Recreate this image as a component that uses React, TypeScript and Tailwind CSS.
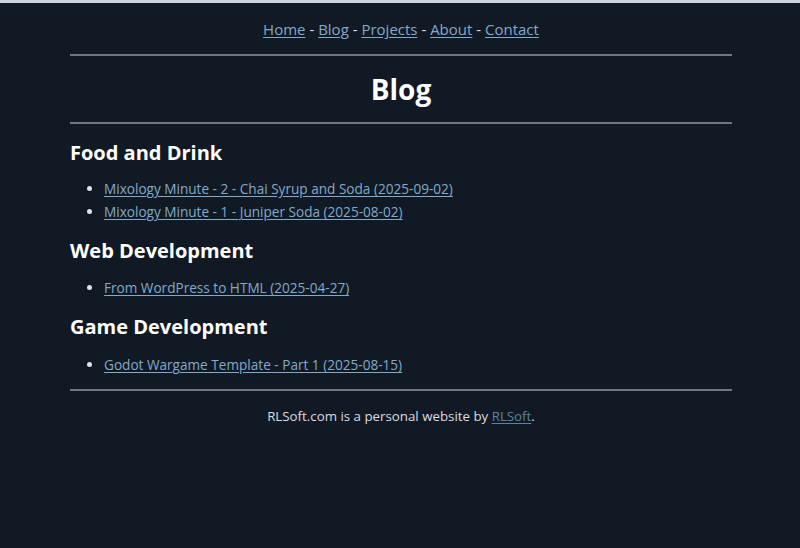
import React from "react";

const font = { fontFamily: '"Open Sans", "Noto Sans", sans-serif' };

function A({ children }: { children: React.ReactNode }) {
  return <a href="#" className="text-[#82a9c9] underline underline-offset-2">{children}</a>;
}

export default function App() {
  return (
    <div className="min-h-[548px] bg-[#111a24] border-t-[3px] border-[#cfd2d6] text-[#dfe3e8]" style={font}>
      <div className="ml-[70px] w-[662px] flex flex-col">
        <nav className="text-center text-[15px] leading-[22px] pt-[15px] pb-[14px] text-[#d8dce0]">
          <A>Home</A> - <A>Blog</A> - <A>Projects</A> - <A>About</A> - <A>Contact</A>
        </nav>
        <div className="h-[2px] bg-[#6f7780]" />
        <h1 className="text-center text-[28px] font-bold text-white leading-[36px] py-[15px]">Blog</h1>
        <div className="h-[2px] bg-[#6f7780]" />
        <h2 className="text-[20px] font-bold text-white leading-[28px] mt-[15px]">Food and Drink</h2>
        <ul className="list-disc pl-[34px] mt-[10px] text-[13.6px] leading-[23px]">
          <li><A>Mixology Minute - 2 - Chai Syrup and Soda (2025-09-02)</A></li>
          <li><A>Mixology Minute - 1 - Juniper Soda (2025-08-02)</A></li>
        </ul>
        <h2 className="text-[20px] font-bold text-white leading-[28px] mt-[14px]">Web Development</h2>
        <ul className="list-disc pl-[34px] mt-[11px] text-[13.6px] leading-[23px]">
          <li><A>From WordPress to HTML (2025-04-27)</A></li>
        </ul>
        <h2 className="text-[20px] font-bold text-white leading-[28px] mt-[14px]">Game Development</h2>
        <ul className="list-disc pl-[34px] mt-[12px] text-[13.6px] leading-[23px]">
          <li><A>Godot Wargame Template - Part 1 (2025-08-15)</A></li>
        </ul>
        <div className="h-[2px] bg-[#6f7780] mt-[13px]" />
        <footer className="text-center text-[13.3px] leading-[22px] mt-[14px] text-[#d8dce0]">
          RLSoft.com is a personal website by <a href="#" className="text-[#5a84a0] underline underline-offset-2">RLSoft</a>.
        </footer>
      </div>
    </div>
  );
}
